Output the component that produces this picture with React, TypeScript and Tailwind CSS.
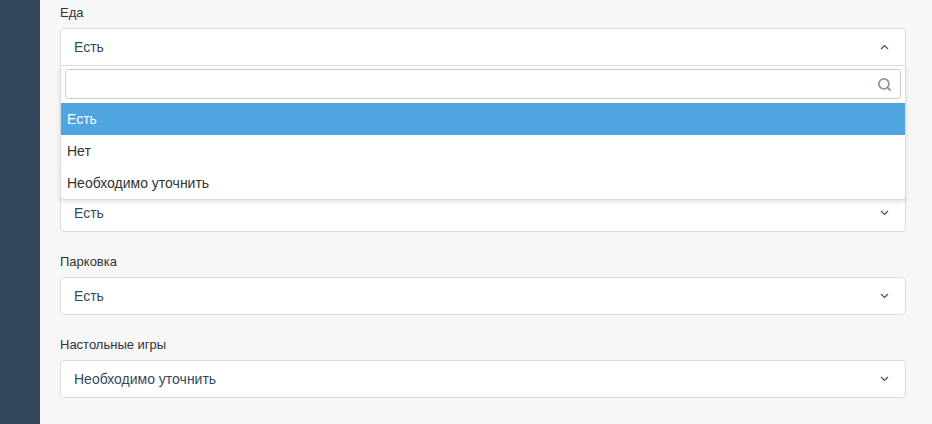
import { Search } from "lucide-react";

type Field = {
  label: string;
  value: string;
  open?: boolean;
};

const FIELDS: Field[] = [
  { label: "Еда", value: "Есть", open: true },
  { label: "Напитки", value: "Есть" },
  { label: "Wi-Fi", value: "Есть" },
  { label: "Парковка", value: "Есть" },
  { label: "Настольные игры", value: "Необходимо уточнить" },
];

const OPTIONS = ["Есть", "Нет", "Необходимо уточнить"];

function Chevron({ up = false }: { up?: boolean }) {
  return (
    <svg width="9" height="6" viewBox="0 0 9 6" className="text-[#3e5166]">
      <path
        d={up ? "M1 5 L4.5 1.5 L8 5" : "M1 1 L4.5 4.5 L8 1"}
        fill="none"
        stroke="currentColor"
        strokeWidth="1.2"
      />
    </svg>
  );
}

function SelectField({ label, value, open }: Field) {
  return (
    <div className="mb-[20px]">
      <div className="mb-[5px] text-[13px] leading-[20px] text-[#333]">{label}</div>
      <div className="relative">
        <div
          className={`flex h-[38px] items-center justify-between border border-[#dcdcdc] bg-white pl-[13px] pr-[16px] text-[14px] text-[#34495e] ${
            open ? "rounded-t-[4px]" : "rounded-[4px]"
          }`}
        >
          <span>{value}</span>
          <Chevron up={open} />
        </div>

        {open && (
          <div className="absolute left-0 right-0 top-[38px] z-10 rounded-b-[4px] border border-t-0 border-[#dcdcdc] bg-white shadow-[0_2px_4px_rgba(0,0,0,0.12)]">
            <div className="px-[4px] pt-[3px] pb-[4px]">
              <div className="flex h-[30px] items-center justify-end rounded-[3px] border border-[#ccc] pr-[8px]">
                <Search size={15} strokeWidth={2.8} className="text-[#8a979f]" />
              </div>
            </div>
            {OPTIONS.map((opt, i) => (
              <div
                key={opt}
                className={`flex h-[32px] items-center pl-[6px] text-[14px] ${
                  i === 0 ? "bg-[#4ea5e0] text-white" : "text-[#333]"
                }`}
              >
                {opt}
              </div>
            ))}
          </div>
        )}
      </div>
    </div>
  );
}

export default function App() {
  return (
    <div
      className="flex h-[424px] w-full overflow-hidden"
      style={{ fontFamily: '"Liberation Sans", Arial, sans-serif' }}
    >
      <aside className="w-[40px] shrink-0 bg-[#33475b]" />
      <main className="flex-1 bg-[#f7f7f7] pl-[20px] pr-[26px] pt-[3px]">
        {FIELDS.map((f) => (
          <SelectField key={f.label} {...f} />
        ))}
      </main>
    </div>
  );
}
